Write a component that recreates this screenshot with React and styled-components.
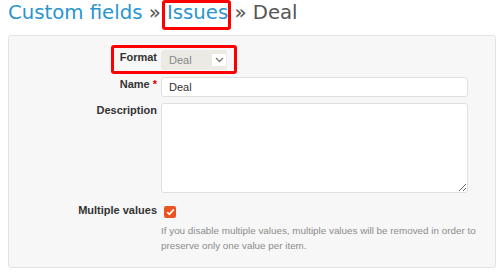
import React from "react";
import styled, { createGlobalStyle } from "styled-components";

const Global = createGlobalStyle`
  html, body { margin: 0; padding: 0; background: #fff; }
  body { font-family: "Liberation Sans", Arial, sans-serif; color: #333; }
`;

const Page = styled.div`
  padding: 0 4px 0 8px;
  width: 500px;
  box-sizing: border-box;
`;

const Title = styled.h2`
  margin: 0;
  padding-top: 1px;
  font-family: "DejaVu Sans", Verdana, sans-serif;
  font-weight: normal;
  font-size: 19.7px;
  line-height: 23px;
  height: 34px;
  color: #555;
  white-space: nowrap;
`;

const Crumb = styled.a`
  color: #2a95d0;
  text-decoration: none;
  position: relative;
  ${(p) =>
    p.$marked &&
    `
    &::after {
      content: "";
      position: absolute;
      left: -5px;
      right: -3px;
      top: -1px;
      bottom: -6px;
      border: 3px solid #f00;
      border-radius: 3px;
    }
  `}
`;

const Box = styled.div`
  width: 488px;
  height: 233px;
  box-sizing: border-box;
  background: #f7f7f7;
  border: 1px solid #e3e3e3;
  border-radius: 3px;
  padding: 14px 27px 0 0;
  display: flex;
  flex-direction: column;
`;

const Row = styled.div`
  display: grid;
  grid-template-columns: 148px 1fr;
  column-gap: 4px;
  margin-top: ${(p) => p.$mt || 0}px;
  position: relative;
  ${(p) =>
    p.$marked &&
    `
    &::after {
      content: "";
      position: absolute;
      left: 102px;
      top: -5px;
      width: 126px;
      height: 29px;
      box-sizing: border-box;
      border: 3px solid #f00;
      border-radius: 3px;
    }
  `}
`;

const Label = styled.label`
  text-align: right;
  font-weight: bold;
  font-size: 11px;
  line-height: 14px;
  color: #333;
  white-space: nowrap;
`;

const Req = styled.span`
  color: #d00;
`;

const Select = styled.div`
  width: 66px;
  height: 20px;
  box-sizing: border-box;
  background: #ebeae4;
  border-radius: 3px;
  display: flex;
  align-items: center;
  justify-content: space-between;
  padding: 0 1px 0 8px;
  font-size: 11px;
  color: #888;
`;

const Chevron = styled.span`
  width: 14px;
  height: 12px;
  background: #fff;
  display: flex;
  align-items: center;
  justify-content: center;
`;

const Input = styled.input`
  width: 307px;
  height: 20px;
  box-sizing: border-box;
  border: 1px solid #e0e0e0;
  border-radius: 3px;
  background: #fff;
  padding: 0 7px;
  font-family: "Liberation Sans", Arial, sans-serif;
  font-size: 11px;
  color: #333;
  outline: none;
`;

const TextArea = styled.textarea`
  width: 307px;
  height: 90px;
  box-sizing: border-box;
  border: 1px solid #e0e0e0;
  border-radius: 3px;
  background: #fff;
  margin: 0;
  display: block;
  outline: none;
`;

const Check = styled.span`
  margin: 3px 0 0 3px;
  width: 12px;
  height: 12px;
  background: #e95420;
  border-radius: 2px;
  display: flex;
  align-items: center;
  justify-content: center;
`;

const Hint = styled.p`
  margin: 5px 0 0 152px;
  font-size: 9.85px;
  line-height: 15px;
  color: #8c8c8c;
  white-space: nowrap;
`;

export default function App() {
  return (
    <>
      <Global />
      <Page>
        <Title>
          <Crumb href="#">Custom fields</Crumb> » <Crumb href="#" $marked>Issues</Crumb> » Deal
        </Title>
        <Box>
          <Row $marked>
            <Label>Format</Label>
            <Select>
              <span>Deal</span>
              <Chevron>
                <svg width="9" height="6" viewBox="0 0 9 6">
                  <path d="M1 1l3.5 3.5L8 1" fill="none" stroke="#777" strokeWidth="1.3" />
                </svg>
              </Chevron>
            </Select>
          </Row>
          <Row $mt={7}>
            <Label>
              Name <Req>*</Req>
            </Label>
            <Input defaultValue="Deal" />
          </Row>
          <Row $mt={6}>
            <Label>Description</Label>
            <TextArea />
          </Row>
          <Row $mt={10}>
            <Label>Multiple values</Label>
            <Check>
              <svg width="9" height="8" viewBox="0 0 9 8">
                <path d="M1.2 4.2l2.2 2.2L7.8 1.4" fill="none" stroke="#fff" strokeWidth="1.6" />
              </svg>
            </Check>
          </Row>
          <Hint>
            If you disable multiple values, multiple values will be removed in order to
            <br />
            preserve only one value per item.
          </Hint>
        </Box>
      </Page>
    </>
  );
}
